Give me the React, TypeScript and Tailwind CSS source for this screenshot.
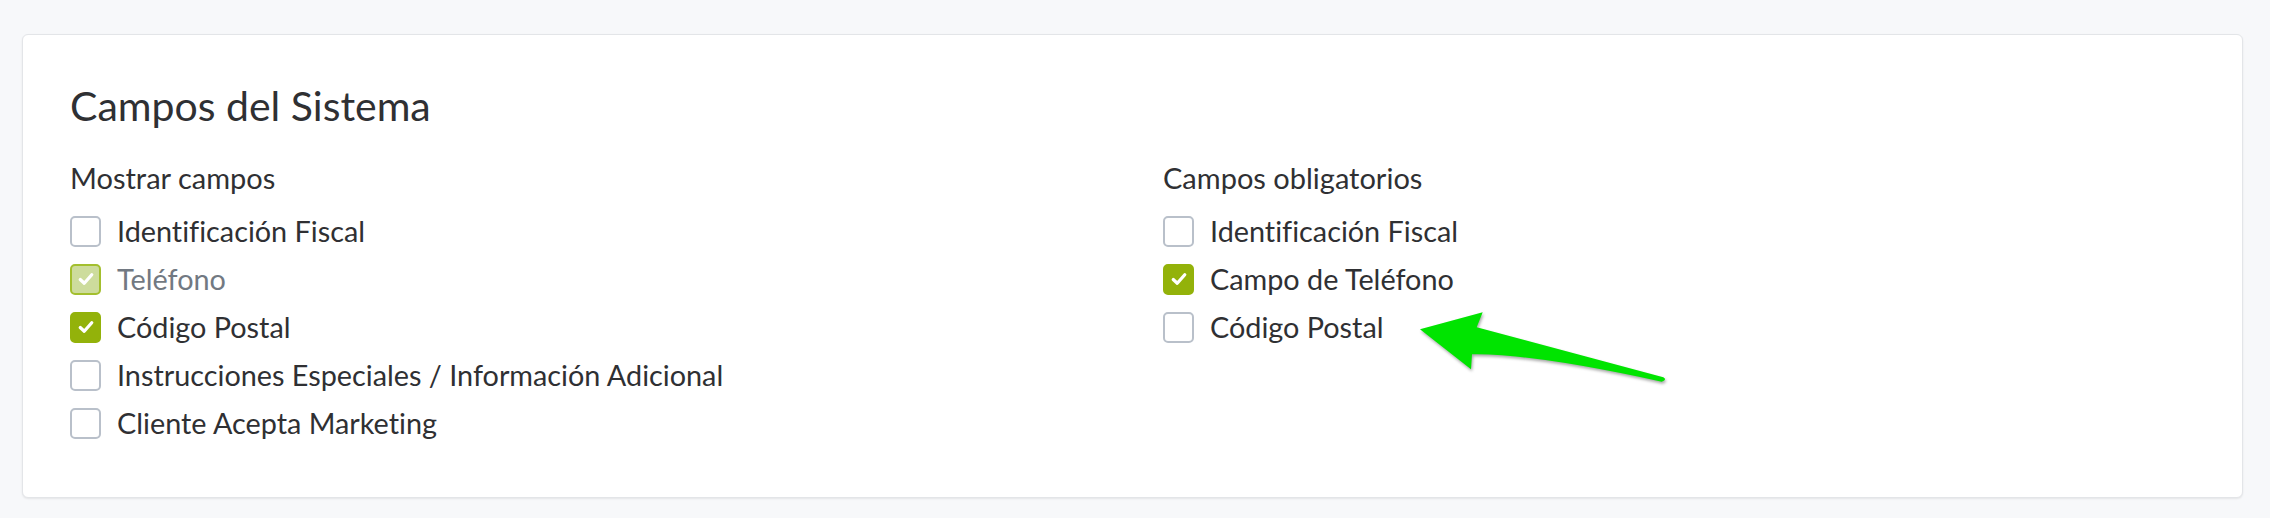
import React from "react";

type Field = { label: string; checked?: boolean; disabled?: boolean };

const visibleFields: Field[] = [
  { label: "Identificación Fiscal" },
  { label: "Teléfono", checked: true, disabled: true },
  { label: "Código Postal", checked: true },
  { label: "Instrucciones Especiales / Información Adicional" },
  { label: "Cliente Acepta Marketing" },
];

const requiredFields: Field[] = [
  { label: "Identificación Fiscal" },
  { label: "Campo de Teléfono", checked: true },
  { label: "Código Postal" },
];

const CheckMark = () => (
  <svg viewBox="0 0 16 16" className="w-[20px] h-[20px]">
    <path
      d="M3.4 8.4 L6.6 11.4 L12.6 4.6"
      fill="none"
      stroke="#fff"
      strokeWidth="2.6"
      strokeLinecap="round"
      strokeLinejoin="round"
    />
  </svg>
);

const FieldRow = ({ field }: { field: Field }) => {
  const { label, checked, disabled } = field;
  let box = "border-[#b9c0ca] bg-white";
  if (checked && disabled) box = "border-[#a3bf2e] bg-[#cddc9c]";
  else if (checked) box = "border-[#93b20a] bg-[#93b20a]";

  return (
    <div className="h-[48px] flex items-center">
      <span
        className={`w-[31px] h-[31px] shrink-0 rounded-[5px] border-2 flex items-center justify-center ${box}`}
      >
        {checked && <CheckMark />}
      </span>
      <span
        className={`ml-[16px] text-[28.8px] leading-[36px] [font-variant-ligatures:none] ${
          disabled ? "text-[#727982]" : "text-[#2f3033]"
        }`}
      >
        {label}
      </span>
    </div>
  );
};

const FieldColumn = ({ title, fields }: { title: string; fields: Field[] }) => (
  <div className="flex flex-col">
    <div className="text-[29px] leading-[36px] text-[#2f3033] mb-[11px]">{title}</div>
    {fields.map((f) => (
      <FieldRow key={f.label} field={f} />
    ))}
  </div>
);

const Arrow = () => (
  <svg
    viewBox="0 0 280 110"
    className="absolute left-[1400px] top-[290px] w-[280px] h-[110px] pointer-events-none"
    style={{ filter: "drop-shadow(1px 2px 1.5px rgba(0,0,0,0.35))" }}
  >
    <path
      d="M20 39.3 L82.7 22.3 L76.7 37.3 L263.3 87.3 Q267.5 89.5 261.7 91.7 Q130 63 72 64.3 L71 79.3 Z"
      fill="#00e400"
    />
  </svg>
);

export default function App() {
  return (
    <div
      className="relative min-h-[518px] bg-[#f7f8fa] pt-[34px] pl-[22px] pr-[27px] pb-[20px]"
      style={{ fontFamily: "Lato, 'Liberation Sans', sans-serif" }}
    >
      <div className="h-[464px] bg-white rounded-[6px] border border-[#e3e5e8] shadow-[0_1px_2px_rgba(0,0,0,0.08)] pt-[47px] pl-[47px]">
        <h2 className="text-[41px] leading-[48px] text-[#2f3033] mb-[30px]">Campos del Sistema</h2>
        <div className="flex">
          <div className="w-[1093px] shrink-0">
            <FieldColumn title="Mostrar campos" fields={visibleFields} />
          </div>
          <FieldColumn title="Campos obligatorios" fields={requiredFields} />
        </div>
      </div>
      <Arrow />
    </div>
  );
}
